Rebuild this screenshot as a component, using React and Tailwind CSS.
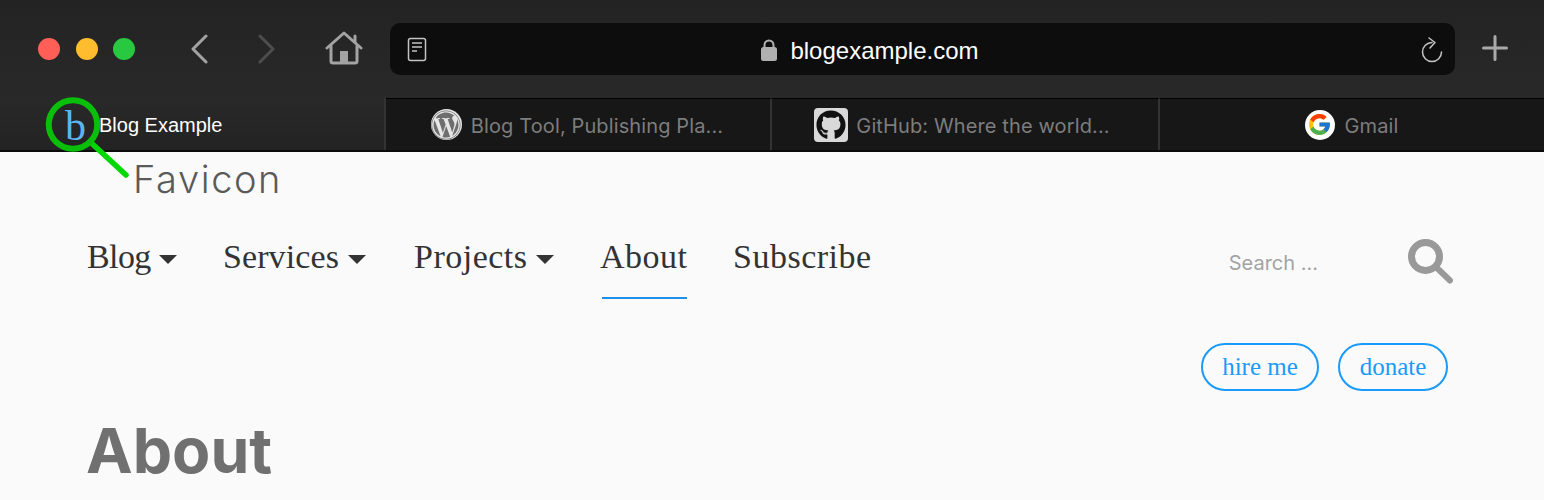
import React from 'react';
import { FaWordpress, FaGithub } from 'react-icons/fa';
import { FcGoogle } from 'react-icons/fc';

const serif = "font-['Liberation_Serif',serif]";

const Light = ({ color }) => <span className={`block w-[22px] h-[22px] rounded-full ${color}`} />;

const NavItem = ({ label, caret, active, labelClass, className = '' }) => (
    <div className={`relative flex items-center gap-[9px] ${className}`}>
        <span className={`${serif} ${labelClass} text-[34px] leading-[40px] text-[#333333] whitespace-nowrap`}>{label}</span>
        {caret && <span className="mt-[4px] w-0 h-0 border-x-[9px] border-x-transparent border-t-[9px] border-t-[#333333]" />}
        {active && <span className="absolute left-[2px] right-0 top-[60px] h-[2px] bg-[#1e90ea]" />}
    </div>
);

const Tab = ({ icon, title, width, gap }) => (
    <div className={`flex items-center justify-center h-full border-t border-t-black ${gap} ${width}`}>
        {icon}
        <span className="mt-[2px] font-['Inter',sans-serif] text-[20px] tracking-[0.12px] text-[#7d7d7d] whitespace-nowrap">{title}</span>
    </div>
);

const App = () => {
    return (
        <div className="relative w-[1544px] h-[500px] overflow-hidden bg-[#fafafa]">
            <div className="flex items-center h-[98px] pl-[38px] bg-gradient-to-b from-[#232323] to-[#292929]">
                <div className="flex gap-[15.500px]">
                    <Light color="bg-[#ff5f57]" />
                    <Light color="bg-[#febc2e]" />
                    <Light color="bg-[#28c840]" />
                </div>
                <svg className="ml-[55px]" width="20" height="30" viewBox="0 0 20 30" fill="none" stroke="#a3a3a3" strokeWidth="3" strokeLinecap="round" strokeLinejoin="round">
                    <path d="M16 2 3 15l13 13" />
                </svg>
                <svg className="ml-[46px]" width="20" height="30" viewBox="0 0 20 30" fill="none" stroke="#4d4d4d" strokeWidth="3" strokeLinecap="round" strokeLinejoin="round">
                    <path d="M4 2l13 13L4 28" />
                </svg>
                <svg className="ml-[49px] mb-[2px]" width="38" height="34" viewBox="0 0 38 34" fill="none" stroke="#a3a3a3" strokeWidth="3" strokeLinecap="round" strokeLinejoin="round">
                    <path d="M2 17 19 2l17 15" />
                    <path d="M30 5v6" />
                    <path d="M6 15v15a2 2 0 0 0 2 2h22a2 2 0 0 0 2-2V15" />
                    <rect x="15" y="20" width="8" height="12" fill="#a3a3a3" stroke="none" />
                </svg>
                <div className="relative flex items-center justify-center ml-[27px] pr-[105px] w-[1065px] h-[52px] rounded-[10px] bg-[#0d0d0d]">
                    <svg className="absolute left-[17px] top-[14px]" width="20" height="25" viewBox="0 0 20 25" fill="none" stroke="#c4c4c4" strokeWidth="1.500">
                        <rect x="1.500" y="1.500" width="17" height="22" rx="2" />
                        <path d="M5 6h10M5 10h10M5 14h5" />
                    </svg>
                    <svg className="mr-[13px]" width="16" height="23" viewBox="0 0 16 23" fill="none">
                        <path d="M3.500 10V7a4.500 4.500 0 0 1 9 0v3" stroke="#b0b0b0" strokeWidth="2" />
                        <rect x="0" y="9" width="16" height="14" rx="2.500" fill="#b0b0b0" />
                    </svg>
                    <span className="mt-[4px] font-['Liberation_Sans',sans-serif] text-[24px] text-white">blogexample.com</span>
                    <svg className="absolute right-[11px] top-[14px]" width="24" height="26" viewBox="0 0 24 26" fill="none" stroke="#c4c4c4" strokeWidth="1.500" strokeLinecap="round" strokeLinejoin="round">
                        <path d="M12 5.500A9.500 9.500 0 1 0 21.500 15" />
                        <path d="M9 1l6 4.500L10 11" />
                    </svg>
                </div>
                <svg className="ml-[27px] mb-[2px]" width="26" height="26" viewBox="0 0 26 26" stroke="#a9a9a9" strokeWidth="3" strokeLinecap="round">
                    <path d="M13 1.500v23M1.500 13h23" />
                </svg>
            </div>

            <div className="flex h-[54px] border-b-2 border-b-[#0a0a0a] bg-[#171717] divide-x-2 divide-[#333333]">
                <div className="flex items-center h-full w-[386px] pl-[99px] bg-gradient-to-b from-[#292929] to-[#232323]">
                    <span className="mt-[2px] font-['Liberation_Sans',sans-serif] text-[20px] text-white">Blog Example</span>
                </div>
                <Tab
                    icon={
                        <span className="flex items-center justify-center w-[31px] h-[31px] rounded-full bg-[#e6e6e6] text-[#6e6e6e]">
                            <FaWordpress size={30} />
                        </span>
                    }
                    title="Blog Tool, Publishing Pla..."
                    width="w-[386px] pr-[2px]"
                    gap="gap-[9px]"
                />
                <Tab
                    icon={
                        <span className="flex items-center justify-center w-[34px] h-[34px] rounded-[4px] bg-[#d9d9d9] text-[#111111]">
                            <FaGithub size={30} />
                        </span>
                    }
                    title="GitHub: Where the world..."
                    width="w-[388px] pr-[6px]"
                    gap="gap-[8px]"
                />
                <Tab
                    icon={
                        <span className="flex items-center justify-center w-[30px] h-[30px] rounded-full bg-white">
                            <FcGoogle size={25} />
                        </span>
                    }
                    title="Gmail"
                    width="w-[384px] pr-[1px]"
                    gap="gap-[10px]"
                />
            </div>

            <div className="flex items-center gap-[46px] pl-[87px] pr-[91px] mt-[85px] h-[40px]">
                <NavItem label="Blog" caret labelClass="w-[63px] tracking-[-0.6px]" />
                <NavItem label="Services" caret labelClass="w-[116px] tracking-[0.1px]" className="mr-[2px]" />
                <NavItem label="Projects" caret labelClass="w-[113px] tracking-[0.5px]" />
                <NavItem label="About" active labelClass="w-[87px] tracking-[0.5px]" />
                <NavItem label="Subscribe" labelClass="w-[138px] tracking-[0.5px]" />
                <span className="ml-auto mt-[12px] font-['Inter',sans-serif] text-[20px] text-[#a3a3a3]">Search ...</span>
                <svg className="ml-[44px] mt-[9px]" width="45" height="45" viewBox="0 0 45 45" fill="none" stroke="#999999" strokeLinecap="round">
                    <circle cx="17.500" cy="17.500" r="14" strokeWidth="7" />
                    <path d="M29 29l13 12.500" strokeWidth="6" />
                </svg>
            </div>

            <div className="flex justify-end gap-[19px] pr-[96px] mt-[66px]">
                <span className={`${serif} flex items-center justify-center w-[118px] h-[48px] rounded-full border-2 border-[#1a9afa] text-[25px] text-[#1a9afa]`}>hire me</span>
                <span className={`${serif} flex items-center justify-center w-[110px] h-[48px] rounded-full border-2 border-[#1a9afa] text-[25px] text-[#1a9afa]`}>donate</span>
            </div>

            <h1 className="pl-[86px] mt-[22px] font-['Inter',sans-serif] font-bold text-[62.500px] leading-[75px] text-[#707070]">About</h1>

            {/* favicon callout on top of the tab strip */}
            <span className={`${serif} absolute left-[65px] top-[102px] text-[42px] leading-[48px] text-[#5bb5f0]`}>b</span>
            <svg className="absolute left-[44px] top-[95px]" width="90" height="85" viewBox="0 0 90 85" fill="none" strokeLinecap="round">
                <path d="M46 46.700 82 80" stroke="#00d800" strokeWidth="5.500" />
                <circle cx="29" cy="29.500" r="24.250" stroke="#09bf09" strokeWidth="6" />
            </svg>
            <span className="absolute left-[133px] top-[156px] font-['Inter',sans-serif] font-light tracking-[1.600px] text-[38px] leading-[46px] text-[#5a5a5a]">Favicon</span>
        </div>
    );
};

export default App;
